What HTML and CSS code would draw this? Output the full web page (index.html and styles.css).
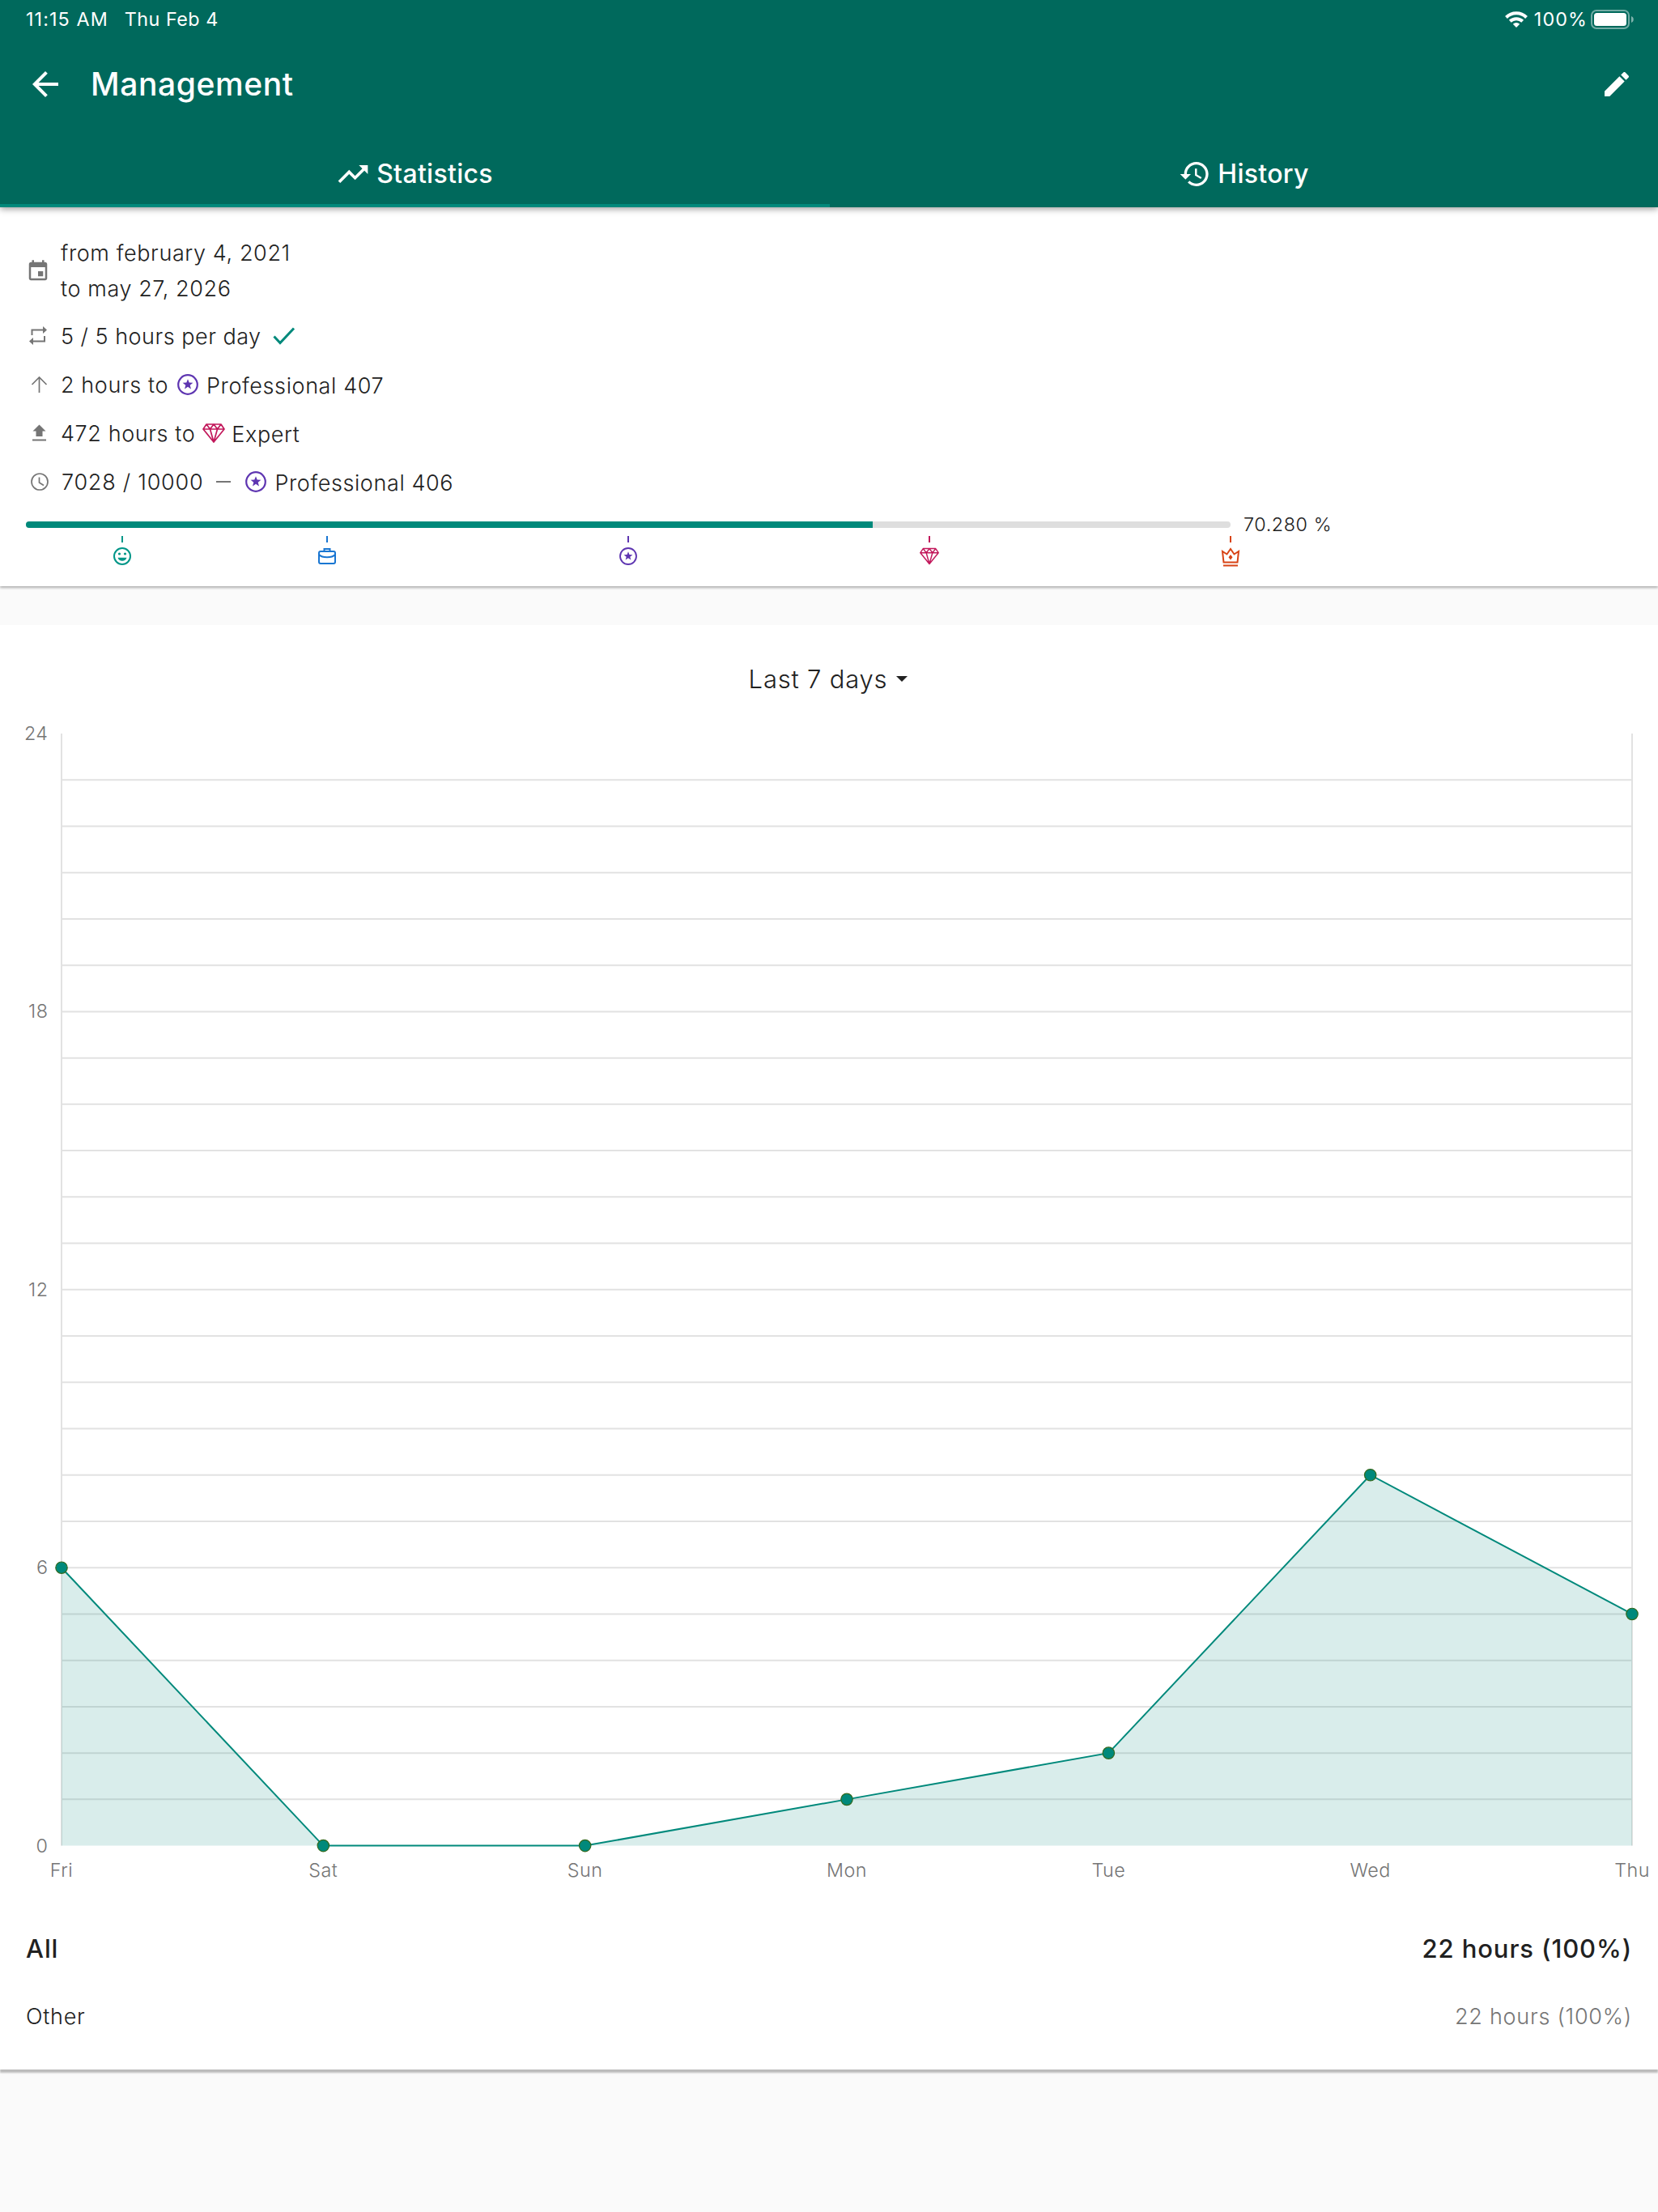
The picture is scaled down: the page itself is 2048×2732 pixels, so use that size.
FILE: index.html
```html
<!DOCTYPE html>
<html lang="en">
  <head>
    <meta charset="UTF-8" />
    <meta name="viewport" content="width=device-width, initial-scale=1.0" />
    <title>Management</title>
    <link rel="stylesheet" href="styles.css">
  </head>
  <body>
    <svg class="sprite" width="0" height="0">
      <symbol id="star" viewBox="0 0 26 26">
        <circle cx="13" cy="13" r="11.8" fill="none" stroke="currentColor" stroke-width="2.2" />
        <path fill="currentColor" d="M13 6.2l1.7 4.4 4.7.2-3.7 3 1.3 4.6-4-2.6-4 2.6 1.3-4.6-3.7-3 4.7-.2z" />
      </symbol>
      <symbol id="diamond" viewBox="0 0 28 24">
        <path fill="none" stroke="currentColor" stroke-width="1.7" stroke-linejoin="round" d="M5 1h18l4 6-13 16L1 7zM1 7h26M5 1l4.500 6L14 1l4.500 6L23 1M9.500 7L14 23l4.500-16" />
      </symbol>
    </svg>

    <header class="header">
      <div class="status-bar">
        <div class="status-left">
          <span class="time">11:15 AM</span>
          <span class="date">Thu Feb 4</span>
        </div>
        <div class="status-right">
          <svg class="wifi" viewBox="0 0 28 20" fill="none" stroke="#fff" stroke-width="4">
            <path d="M1.500 7.500a17.700 17.700 0 0 1 25 0" />
            <path d="M6.300 12.300a11 11 0 0 1 15.400 0" />
            <path d="M14 20l-4.200-4.300a6 6 0 0 1 8.400 0z" fill="#fff" stroke="none" />
          </svg>
          <span class="battery-text">100%</span>
          <svg class="battery" viewBox="0 0 54 24">
            <rect x="1" y="1" width="46" height="22" rx="6" fill="none" stroke="#fff" stroke-opacity=".45" stroke-width="2" />
            <rect x="4" y="4" width="40" height="16" rx="3.500" fill="#fff" />
            <path d="M50 8c3.700 1.300 3.700 6.700 0 8z" fill="#fff" fill-opacity=".5" />
          </svg>
        </div>
      </div>

      <div class="app-bar">
        <svg class="icon-back" viewBox="0 0 24 24" fill="#fff"><path d="M20 11H7.830l5.590-5.590L12 4l-8 8 8 8 1.410-1.410L7.830 13H20v-2z" /></svg>
        <h1 class="title">Management</h1>
        <svg class="icon-edit" viewBox="0 0 24 24" fill="#fff"><path d="M3 17.250V21h3.750L17.810 9.940l-3.750-3.750L3 17.250zM20.710 7.040c.39-.39.39-1.020 0-1.410l-2.340-2.340c-.39-.39-1.020-.39-1.410 0l-1.830 1.830 3.750 3.750 1.830-1.830z" /></svg>
      </div>

      <nav class="tabs">
        <div class="tab active">
          <svg class="icon-trend" viewBox="0 0 24 24" fill="#fff"><path d="M16 6l2.290 2.290-4.880 4.880-4-4L2 16.590 3.410 18l6-6 4 4 6.300-6.290L22 12V6z" /></svg>
          <span>Statistics</span>
        </div>
        <div class="tab">
          <svg class="icon-history" viewBox="0 0 24 24" fill="#fff"><path d="M13 3c-4.970 0-9 4.030-9 9H1l3.890 3.890.07.14L9 12H6c0-3.870 3.130-7 7-7s7 3.130 7 7-3.130 7-7 7c-1.930 0-3.680-.79-4.940-2.060l-1.420 1.420C8.270 19.990 10.510 21 13 21c4.970 0 9-4.030 9-9s-4.030-9-9-9zm-1 5v5l4.280 2.540.72-1.210-3.500-2.080V8H12z" /></svg>
          <span>History</span>
        </div>
      </nav>
    </header>

    <section class="card info">
      <div class="row row-dates">
        <svg class="calendar" viewBox="0 0 24 24" fill="#757575"><path d="M17 12h-5v5h5v-5zM16 1v2H8V1H6v2H5c-1.110 0-1.990.9-1.990 2L3 19c0 1.100.89 2 2 2h14c1.100 0 2-.9 2-2V5c0-1.100-.9-2-2-2h-1V1h-2zm3 18H5V8h14v11z" /></svg>
        <div class="dates">
          <p>from february 4, 2021</p>
          <p>to may 27, 2026</p>
        </div>
      </div>
      <div class="row">
        <svg class="icon-row" viewBox="0 0 24 24" fill="#757575"><path d="M2.500 3.500H17V0l5 4.500L17 9V5.500H4.500V11h-2zM20 19.500H5V23l-5-4.500L5 14v3.500h13V12h2z" /></svg>
        <span class="per-day">5 / 5 hours per day</span>
        <svg class="check" viewBox="0 0 28 22"><path d="M1.500 11.500l7.500 8L26 1.500" fill="none" stroke="#00897b" stroke-width="3" /></svg>
      </div>
      <div class="row">
        <svg class="icon-row" viewBox="0 0 24 24"><path d="M12.500 22V3M3.500 12l9-9 9 9" fill="none" stroke="#757575" stroke-width="1.700" /></svg>
        <span>2 hours to</span>
        <svg class="star"><use href="#star" /></svg>
        <span class="level-name">Professional 407</span>
      </div>
      <div class="row">
        <svg class="icon-row" viewBox="0 0 24 24" fill="#757575"><path d="M12.500 1.500l8 8h-4V16h-8V9.500h-4zM4 19.500h17v2H4z" /></svg>
        <span>472 hours to</span>
        <svg class="diamond"><use href="#diamond" /></svg>
        <span class="level-name">Expert</span>
      </div>
      <div class="row">
        <svg class="icon-row" viewBox="0 0 24 24" fill="none" stroke="#757575" stroke-width="1.700"><circle cx="13" cy="12" r="10" /><path d="M12.500 6.500v6.500l5.500 3.500" /></svg>
        <span class="total">7028 / 10000</span>
        <span class="dash"></span>
        <svg class="star"><use href="#star" /></svg>
        <span class="level-name">Professional 406</span>
      </div>

      <div class="progress">
        <div class="track">
          <div class="fill" style="width: 70.28%"></div>
        </div>
        <span class="percent">70.280 %</span>
      </div>
      <div class="levels">
        <div class="mark green" style="left: 8%">
          <svg viewBox="0 0 22 22"><circle cx="11" cy="11" r="10" fill="none" stroke="currentColor" stroke-width="2" /><circle cx="7.500" cy="8" r="1.600" fill="currentColor" /><circle cx="14.500" cy="8" r="1.600" fill="currentColor" /><path d="M5.500 12.800h11c-1.300 5.200-9.700 5.200-11 0z" fill="currentColor" /></svg>
        </div>
        <div class="mark blue" style="left: 25%">
          <svg viewBox="0 0 22 22" fill="none" stroke="currentColor" stroke-width="2"><rect x="1" y="5" width="20" height="15" rx="2" /><path d="M7.500 5V2h7v3M1 9c4 4.300 16 4.300 20 0" /></svg>
        </div>
        <div class="mark purple" style="left: 50%">
          <svg><use href="#star" /></svg>
        </div>
        <div class="mark pink" style="left: 75%">
          <svg><use href="#diamond" /></svg>
        </div>
        <div class="mark orange" style="left: 100%">
          <svg class="crown" viewBox="0 0 24 24" fill="none" stroke="currentColor" stroke-width="2"><path d="M3.500 18.500L2 5l5.500 3.500L12 2l4.500 6.500L22 5l-1.500 13.500zM3 22.500h18" /><path d="M12 9l2.500 3.200L12 15.400l-2.500-3.200z" fill="currentColor" stroke="none" /></svg>
        </div>
      </div>
    </section>

    <section class="card stats">
      <div class="period">
        <span>Last 7 days</span>
        <i class="caret"></i>
      </div>

      <svg class="chart" viewBox="0 0 2048 1450">
        <g id="grid" class="grid"></g>
        <path id="area" class="area" />
        <path id="line" class="line" />
        <g id="dots" class="dots"></g>
        <g id="labels" class="labels"></g>
      </svg>

      <div class="summary all">
        <span>All</span>
        <span>22 hours (100%)</span>
      </div>
      <div class="summary other">
        <span>Other</span>
        <span class="other-hours">22 hours (100%)</span>
      </div>
    </section>

    <script>
      const days = ["Fri", "Sat", "Sun", "Mon", "Tue", "Wed", "Thu"];
      const hours = [6, 0, 0, 1, 2, 8, 5];
      const left = 76;
      const right = 2016;
      const top24 = 20;
      const bottom = 1393.6;

      const x = (i) => left + ((right - left) * i) / 6;
      const y = (h) => bottom - ((bottom - top24) * h) / 24;

      let grid = "";
      for (let h = 1; h < 24; h++) {
        grid += `<path d="M${left} ${y(h)}H${right}" />`;
      }
      grid += `<path d="M${left} ${top24}V${bottom}M${right} ${top24}V${bottom}" />`;
      document.getElementById("grid").innerHTML = grid;

      const points = hours.map((h, i) => `${x(i)} ${y(h)}`).join("L");
      document.getElementById("line").setAttribute("d", `M${points}`);
      document
        .getElementById("area")
        .setAttribute("d", `M${points}V${bottom}H${left}z`);
      document.getElementById("dots").innerHTML = hours
        .map((h, i) => `<circle cx="${x(i)}" cy="${y(h)}" r="7.2" />`)
        .join("");

      let labels = "";
      for (let h = 0; h <= 24; h += 6) {
        labels += `<text x="59.5" y="${y(h) + 8}" text-anchor="end">${h}</text>`;
      }
      days.forEach((day, i) => {
        labels += `<text x="${x(i)}" y="1432" text-anchor="middle">${day}</text>`;
      });
      document.getElementById("labels").innerHTML = labels;
    </script>
  </body>
</html>
```
FILE: styles.css
```css
* {
  box-sizing: border-box;
  margin: 0;
  padding: 0;
}

body {
  min-height: 2732px;
  background-color: #fafafa;
  color: #212121;
  font-family: Inter, "Liberation Sans", sans-serif;
  font-size: 27px;
  font-weight: 360;
  letter-spacing: 0.6px;
}

svg {
  display: block;
  flex-shrink: 0;
}

.sprite {
  position: absolute;
}

.header {
  position: relative;
  height: 256px;
  background-color: #00695c;
  color: #fff;
  box-shadow: 0 2px 8px rgba(0, 0, 0, 0.4);
}

.status-bar {
  display: flex;
  justify-content: space-between;
  height: 48px;
  padding: 0 29px 0 32px;
  font-size: 23.3px;
  font-weight: 400;
  line-height: 48px;
  letter-spacing: 0.5px;
}

.status-left,
.status-right {
  display: flex;
  align-items: center;
}

.status-left {
  gap: 20px;
}

.time {
  letter-spacing: 1.1px;
}

.wifi {
  width: 28px;
  height: 20px;
  margin-right: 8px;
}

.battery-text {
  margin-right: 4px;
  letter-spacing: 1.1px;
}

.battery {
  width: 54px;
  height: 24px;
}

.app-bar {
  display: flex;
  align-items: center;
  height: 112px;
  padding: 0 31px 0 32px;
}

.icon-back {
  width: 48px;
  height: 48px;
}

.icon-edit {
  width: 40px;
  height: 40px;
}

.title {
  flex: 1;
  margin-left: 32px;
  padding-bottom: 2px;
  font-size: 39px;
  font-weight: 500;
  letter-spacing: 0.6px;
}

.tabs {
  display: flex;
  height: 96px;
}

.tab {
  display: flex;
  flex: 1;
  align-items: center;
  justify-content: center;
  gap: 8px;
  padding-top: 17px;
  border-bottom: 4px solid transparent;
  font-size: 32px;
  font-weight: 500;
  letter-spacing: 0.3px;
}

.tab.active {
  gap: 7px;
  padding-right: 2px;
  border-bottom-color: #00897b;
}

.icon-trend {
  width: 44px;
  height: 44px;
}

.icon-history {
  width: 40px;
  height: 40px;
}

.card {
  background-color: #fff;
}

.info {
  height: 468px;
  padding: 35px 32px 0;
  box-shadow: 0 2px 3px rgba(0, 0, 0, 0.3);
}

.row {
  display: flex;
  align-items: center;
  height: 60px;
}

.row-dates {
  height: 88px;
  margin-bottom: 6px;
  line-height: 44px;
}

.icon-row {
  width: 24px;
  height: 24px;
  margin: 0 15px 0 4px;
}

.calendar {
  width: 30px;
  height: 30px;
  margin-right: 13px;
}

.per-day {
  letter-spacing: 0.5px;
}

.check {
  width: 28px;
  height: 22px;
  margin-left: 14px;
}

.star {
  width: 26px;
  height: 26px;
  margin: 0 10px 0 11px;
  color: #5e35b1;
}

.diamond {
  width: 28px;
  height: 24px;
  margin: 0 8px 0 9px;
  color: #c2185b;
}

.level-name {
  padding-top: 2px;
}

.total {
  margin-left: 1px;
  letter-spacing: 0.75px;
}

.dash {
  width: 18px;
  height: 2px;
  margin: 0 7px 0 16px;
  background-color: #757575;
}

.progress {
  display: flex;
  align-items: center;
  height: 36px;
  margin-top: 5px;
}

.track {
  width: 1488px;
  height: 8px;
  margin-right: 16px;
  overflow: hidden;
  border-radius: 4px;
  background-color: #dedede;
}

.fill {
  height: 8px;
  background-color: #00897b;
}

.percent {
  padding-bottom: 2px;
  font-size: 23.3px;
}

.levels {
  position: relative;
  width: 1488px;
}

/* level marks sit at their share of the track */
.mark {
  position: absolute;
  top: -4px;
  display: flex;
  flex-direction: column;
  align-items: center;
  gap: 6px;
  width: 24px;
  margin-left: -12px;
}

.mark::before {
  width: 2px;
  height: 8px;
  background-color: currentColor;
  content: "";
}

.mark svg {
  width: 24px;
  height: 22px;
}

.mark .crown {
  height: 24px;
}

.green {
  color: #009688;
}

.blue {
  color: #1976d2;
}

.purple {
  color: #5e35b1;
}

.pink {
  color: #c2185b;
}

.orange {
  color: #d84315;
}

.stats {
  height: 1784px;
  margin-top: 48px;
  box-shadow: 0 4px 2px #bbb;
}

.period {
  display: flex;
  align-items: center;
  justify-content: center;
  gap: 11px;
  height: 114px;
  padding: 18px 2px 0 0;
  font-size: 31px;
  letter-spacing: 0.8px;
}

.caret {
  border: 7px solid transparent;
  border-top-color: #212121;
  border-bottom: 0;
}

.chart {
  width: 2048px;
  height: 1450px;
}

.grid {
  fill: none;
  stroke: #e2e2e2;
  stroke-width: 2;
}

.area {
  fill: #00897b;
  fill-opacity: 0.15;
}

.line {
  fill: none;
  stroke: #00897b;
  stroke-width: 2;
}

.dots {
  fill: #00897b;
  stroke: #33691e;
  stroke-width: 1.2;
}

.labels {
  fill: #757575;
  font-size: 23.3px;
  letter-spacing: 0.5px;
}

.summary {
  display: flex;
  align-items: center;
  justify-content: space-between;
  height: 84px;
  padding: 56px 32px 0;
  letter-spacing: 0.75px;
}

.all {
  font-size: 31px;
  font-weight: 460;
  letter-spacing: 0.9px;
}

.other-hours {
  color: #757575;
}
```
